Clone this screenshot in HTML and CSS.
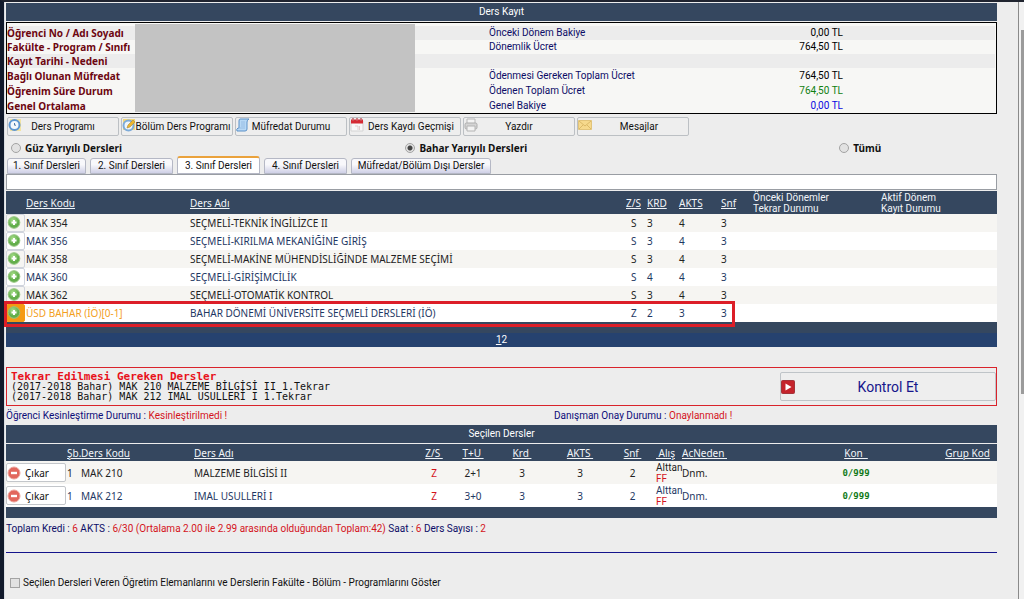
FILE: index.html
```html
<!DOCTYPE html>
<html lang="tr">
<head>
<meta charset="utf-8">
<title>Ders Kayıt</title>
<link rel="stylesheet" href="styles.css">
</head>
<body>
<svg class="defs" aria-hidden="true">
  <defs>
    <radialGradient id="green" cx="40%" cy="30%"><stop offset="0" stop-color="#a6dd88"/><stop offset="1" stop-color="#62ae4b"/></radialGradient>
    <symbol id="plus" viewBox="0 0 14 14"><circle cx="7" cy="6.500" r="5.800" fill="url(#green)" stroke="#94c57f"/><path d="M7 4v5M4.500 6.500h5" stroke="#fff" stroke-width="2"/></symbol>
    <symbol id="minus" viewBox="0 0 14 14"><circle cx="7" cy="7" r="6" fill="#e2675d" stroke="#eda39b"/><path d="M4 7h6" stroke="#fff" stroke-width="2.400"/></symbol>
    <symbol id="clock" viewBox="0 0 14 14"><path d="M2 1h11v12H2z" fill="#f3e3a2"/><circle cx="6.500" cy="7" r="5" fill="#f3f8fd" stroke="#5b95d2" stroke-width="2"/><path d="M6.500 5v2.200H8" fill="none" stroke="#4c79ab"/></symbol>
    <symbol id="clockedit" viewBox="0 0 14 14"><path d="M1 1h12v11H1z" fill="#f2d779"/><circle cx="6.500" cy="7.500" r="5" fill="#eef5fb" stroke="#7cabd9" stroke-width="2"/><path d="M5 10l1-3 5-5 2 2-5 5z" fill="#edb72e" stroke="#a98a3b" stroke-width=".6"/></symbol>
    <symbol id="scroll" viewBox="0 0 14 14"><path d="M4 1h9q-2 1-2 3v7q0 2-2 2H1q-1-2 1-3h1V3q0-2 1-2z" fill="#b7d8f5" stroke="#5b91c8"/><path d="M5 4h4M5 6h4M5 8h4M2 10h7" stroke="#8fb8e0" stroke-width=".8"/></symbol>
    <symbol id="calendar" viewBox="0 0 14 14"><path d="M1 3h12v10H1z" fill="#f8f8f8" stroke="#d4d4d4"/><path d="M1 1.500h12v4H1z" fill="#d52a33"/><path d="M3 0v3M7 0v3M11 0v3" stroke="#a51620"/><path d="M3 1v2M7 1v2M11 1v2" stroke="#f5d9d9" stroke-width=".5"/><path d="M5 8h3v4M9.500 8v4" fill="none" stroke="#e0cfcf"/></symbol>
    <symbol id="printer" viewBox="0 0 14 14"><path d="M3 1h8v5H3z" fill="#f4f4f4" stroke="#b8b8b8"/><rect x="1" y="5" width="12" height="6" rx="1.500" fill="#d4d4d4" stroke="#adadad"/><path d="M3 8h8v5H3z" fill="#f3f3f3" stroke="#b4b4b4"/></symbol>
    <symbol id="mail" viewBox="0 0 14 14"><path d="M.5 2.500h13v9H.5z" fill="#f6d98c" stroke="#e2c47a"/><path d="M1 3l6 5 6-5M1 11l4-4M13 11L9 7" fill="none" stroke="#dbb967"/></symbol>
    <symbol id="play" viewBox="0 0 14 14"><rect x=".5" y=".5" width="13" height="13" rx="1" fill="#c5242c" stroke="#a3343a"/><path d="M4.500 3.500v7L10.500 7z" fill="#fff"/></symbol>
  </defs>
</svg>
<div class="shell">
<main class="page">
  <h1 class="bar title">Ders Kayıt</h1>

  <section class="info">
    <div class="photo"></div>
    <table class="info-table">
      <colgroup><col class="i-name"><col class="i-hidden"><col class="i-label"><col class="i-amount"><col></colgroup>
      <tr><th>Öğrenci No / Adı Soyadı</th><td></td><td>Önceki Dönem Bakiye</td><td class="amount">0,00 TL</td><td></td></tr>
      <tr><th>Fakülte - Program / Sınıfı</th><td></td><td>Dönemlik Ücret</td><td class="amount">764,50 TL</td><td></td></tr>
      <tr><th>Kayıt Tarihi - Nedeni</th><td></td><td></td><td></td><td></td></tr>
      <tr><th>Bağlı Olunan Müfredat</th><td></td><td>Ödenmesi Gereken Toplam Ücret</td><td class="amount">764,50 TL</td><td></td></tr>
      <tr><th>Öğrenim Süre Durum</th><td></td><td>Ödenen Toplam Ücret</td><td class="amount paid">764,50 TL</td><td></td></tr>
      <tr><th>Genel Ortalama</th><td></td><td>Genel Bakiye</td><td class="amount balance">0,00 TL</td><td></td></tr>
    </table>
  </section>

  <nav class="tools">
    <button type="button"><svg class="icon"><use href="#clock"/></svg>Ders Programı</button>
    <button type="button" class="long"><svg class="icon"><use href="#clockedit"/></svg>Bölüm Ders Programı</button>
    <button type="button"><svg class="icon"><use href="#scroll"/></svg>Müfredat Durumu</button>
    <button type="button" class="long"><svg class="icon"><use href="#calendar"/></svg>Ders Kaydı Geçmişi</button>
    <button type="button"><svg class="icon"><use href="#printer"/></svg>Yazdır</button>
    <button type="button" class="long"><svg class="icon"><use href="#mail"/></svg>Mesajlar</button>
  </nav>

  <div class="terms">
    <label><input type="radio" name="term">Güz Yarıyılı Dersleri</label>
    <label><input type="radio" name="term" checked>Bahar Yarıyılı Dersleri</label>
    <label><input type="radio" name="term">Tümü</label>
  </div>

  <nav class="tabs">
    <button type="button">1. Sınıf Dersleri</button>
    <button type="button">2. Sınıf Dersleri</button>
    <button type="button" class="active">3. Sınıf Dersleri</button>
    <button type="button">4. Sınıf Dersleri</button>
    <button type="button" class="wide">Müfredat/Bölüm Dışı Dersler</button>
  </nav>
  <div class="tab-panel"></div>

  <table class="grid courses">
    <colgroup><col class="c-icon"><col class="c-code"><col><col class="c-zs"><col class="c-krd"><col class="c-akts"><col class="c-snf"><col class="c-prev"><col class="c-act"></colgroup>
    <thead><tr><th></th><th><a href="#">Ders Kodu</a></th><th><a href="#">Ders Adı</a></th><th><a href="#">Z/S</a></th><th><a href="#">KRD</a></th><th><a href="#">AKTS</a></th><th><a href="#">Snf</a></th><th class="state">Önceki Dönemler<br>Tekrar Durumu</th><th class="state">Aktif Dönem<br>Kayıt Durumu</th></tr></thead>
    <tbody>
      <tr><td><button type="button" class="add" aria-label="Ekle"><svg class="icon"><use href="#plus"/></svg></button></td><td>MAK 354</td><td>SEÇMELİ-TEKNİK İNGİLİZCE II</td><td class="zs">S</td><td>3</td><td>4</td><td>3</td><td></td><td></td></tr>
      <tr><td><button type="button" class="add" aria-label="Ekle"><svg class="icon"><use href="#plus"/></svg></button></td><td>MAK 356</td><td>SEÇMELİ-KIRILMA MEKANİĞİNE GİRİŞ</td><td class="zs">S</td><td>3</td><td>4</td><td>3</td><td></td><td></td></tr>
      <tr><td><button type="button" class="add" aria-label="Ekle"><svg class="icon"><use href="#plus"/></svg></button></td><td>MAK 358</td><td>SEÇMELİ-MAKİNE MÜHENDİSLİĞİNDE MALZEME SEÇİMİ</td><td class="zs">S</td><td>3</td><td>4</td><td>3</td><td></td><td></td></tr>
      <tr><td><button type="button" class="add" aria-label="Ekle"><svg class="icon"><use href="#plus"/></svg></button></td><td>MAK 360</td><td>SEÇMELİ-GİRİŞİMCİLİK</td><td class="zs">S</td><td>4</td><td>4</td><td>3</td><td></td><td></td></tr>
      <tr><td><button type="button" class="add" aria-label="Ekle"><svg class="icon"><use href="#plus"/></svg></button></td><td>MAK 362</td><td>SEÇMELİ-OTOMATİK KONTROL</td><td class="zs">S</td><td>3</td><td>4</td><td>3</td><td></td><td></td></tr>
      <tr class="marked"><td><button type="button" class="add" aria-label="Ekle"><svg class="icon"><use href="#plus"/></svg></button><span class="outline"></span></td><td class="orange">ÜSD BAHAR (İÖ)[0-1]</td><td>BAHAR DÖNEMİ ÜNİVERSİTE SEÇMELİ DERSLERİ (İÖ)</td><td class="zs">Z</td><td>2</td><td>3</td><td>3</td><td></td><td></td></tr>
    </tbody>
  </table>
  <div class="foot"></div>
  <div class="pager"><a href="#">1</a><span>2</span></div>

  <section class="alert">
    <div class="alert-text">
      <h2>Tekrar Edilmesi Gereken Dersler</h2>
      <p>(2017-2018 Bahar) MAK 210 MALZEME BİLGİSİ II 1.Tekrar</p>
      <p>(2017-2018 Bahar) MAK 212 IMAL USULLERİ I 1.Tekrar</p>
    </div>
    <button type="button" class="check"><svg class="icon"><use href="#play"/></svg>Kontrol Et</button>
  </section>

  <div class="status">
    <p>Öğrenci Kesinleştirme Durumu : <span class="red">Kesinleştirilmedi !</span></p>
    <p>Danışman Onay Durumu : <span class="red">Onaylanmadı !</span></p>
  </div>

  <h2 class="bar chosen-title">Seçilen Dersler</h2>
  <table class="grid chosen">
    <colgroup><col class="s-btn"><col class="s-sb"><col class="s-code"><col><col class="s-zs"><col class="s-tu"><col class="s-num"><col class="s-num"><col class="s-snf"><col class="s-alis"><col class="s-neden"><col class="s-kon"><col class="s-grup"></colgroup>
    <thead><tr><th></th><th><a href="#">Şb.</a></th><th><a href="#">Ders Kodu</a></th><th><a href="#">Ders Adı</a></th><th class="mid"><a href="#">Z/S&nbsp;</a></th><th class="mid"><a href="#">T+U&nbsp;</a></th><th class="mid"><a href="#">Krd&nbsp;</a></th><th class="mid"><a href="#">AKTS&nbsp;</a></th><th class="mid"><a href="#">Snf&nbsp;</a></th><th><a href="#">&nbsp;Alış</a></th><th><a href="#">AcNeden&nbsp;</a></th><th class="mid"><a href="#">Kon&nbsp;&nbsp;</a></th><th class="mid"><a href="#">Grup Kod</a></th></tr></thead>
    <tbody>
      <tr><td><button type="button" class="drop"><svg class="icon"><use href="#minus"/></svg>Çıkar</button></td><td>1</td><td>MAK 210</td><td>MALZEME BİLGİSİ II</td><td class="mid red">Z</td><td class="mid">2+1</td><td class="mid">3</td><td class="mid">3</td><td class="mid">2</td><td class="grade">Alttan<br><span class="red">FF</span></td><td>Dnm.</td><td class="mid quota">0/999</td><td></td></tr>
      <tr><td><button type="button" class="drop"><svg class="icon"><use href="#minus"/></svg>Çıkar</button></td><td>1</td><td>MAK 212</td><td>IMAL USULLERİ I</td><td class="mid red">Z</td><td class="mid">3+0</td><td class="mid">3</td><td class="mid">3</td><td class="mid">2</td><td class="grade">Alttan<br><span class="red">FF</span></td><td>Dnm.</td><td class="mid quota">0/999</td><td></td></tr>
    </tbody>
  </table>
  <div class="foot"></div>

  <p class="totals">Toplam Kredi : <span class="red">6</span> AKTS : <span class="red">6/30 (Ortalama 2.00 ile 2.99 arasında olduğundan Toplam:42)</span> Saat : <span class="red">6</span> Ders Sayısı : <span class="red">2</span></p>
  <hr>
  <label class="show"><input type="checkbox">Seçilen Dersleri Veren Öğretim Elemanlarını ve Derslerin Fakülte - Bölüm - Programlarını Göster</label>
</main>
<div class="scroll"><div class="thumb"></div></div>
</div>
</body>
</html>
```
FILE: styles.css
```css
* { box-sizing: border-box; }

body {
  margin: 0;
  background: #ededed;
  color: #111;
  font: 10px/12px Roboto, sans-serif;
  overflow: hidden;
}

h1, h2, p { margin: 0; font-size: 10px; font-weight: 400; }
button { font: inherit; color: inherit; padding: 0; margin: 0; }
.defs { position: absolute; width: 0; height: 0; }
.icon { width: 14px; height: 14px; flex: none; display: block; }
.red { color: #d4141c; }

.shell {
  display: flex;
  min-height: 100vh;
  border-top: 2px solid #20242f;
  border-left: 4px solid #111a2b;
}

.page { flex: 1; padding: 1px 21px 8px 1px; border-left: 1px solid #d9dde2; }

.scroll { width: 6px; border-left: 1px solid #8a8a8a; background: #f1f1f1; padding: 28px 0 0 2px; }
.thumb { height: 364px; background: #9b9b9b; }

.bar { background: #35475f; color: #fff; text-align: center; line-height: 18px; }

/* Student and fee summary */
.info { position: relative; border: 1px solid #000; margin-top: 1px; padding: 3px 1px 0 0; background: #f7f7f5; }
.info-table { width: 100%; border-collapse: collapse; table-layout: fixed; }
.info-table th, .info-table td { padding: 0; height: 15px; line-height: 14px; text-align: left; white-space: nowrap; color: #0c0c66; }
.info-table tr:nth-child(-n+3) th, .info-table tr:nth-child(-n+3) td { height: 14px; }
.info-table th { color: #6d0610; font-family: "Noto Sans", sans-serif; font-weight: 700; }
.info-table tr:nth-child(1), .info-table tr:nth-child(3) { background: #ececec; }
.info-table .amount { text-align: right; color: #000; }
.info-table .paid { color: #108010; }
.info-table .balance { color: #0a0ae0; }
.i-name { width: 129px; }
.i-hidden { width: 353px; }
.i-label { width: 203px; }
.i-amount { width: 151px; }
.photo { position: absolute; left: 128px; top: 1px; bottom: 1px; width: 280px; background: #c3c3c3; }

/* Toolbar */
.tools { display: flex; gap: 2px; padding: 3px 0 0 1px; }
.tools button { position: relative; width: 112px; height: 19px; border: 1px solid #bcc0c4; border-radius: 2px; background: #eee; line-height: 17px; white-space: nowrap; }
.tools .long { padding-left: 12px; }
.tools .icon { position: absolute; left: 0; top: 0; }

.terms { display: grid; grid-template-columns: 40% 44% 1fr; padding: 5px 0 1px 5px; font-family: "Noto Sans", sans-serif; font-weight: 700; }
.terms label { display: flex; align-items: center; gap: 4px; height: 14px; white-space: nowrap; }
.terms input, .show input { appearance: none; margin: 0; width: 10px; height: 10px; border: 1px solid #a3a3a3; background: #e2e2e2; }
.terms input { border-radius: 50%; }
.terms input:checked { background: radial-gradient(circle, #444 0 2px, #e2e2e2 3px); }

/* Tabs */
.tabs { display: flex; align-items: flex-end; gap: 4px; padding-left: 1px; }
.tabs button { width: 83px; height: 16px; border: 1px solid #b5b8c5; border-radius: 3px 3px 0 0; background: linear-gradient(#f8f8fb 40%, #cfd0e6); line-height: 14px; white-space: nowrap; }
.tabs button:first-child { width: 79px; }
.tabs .active { height: 18px; border-top: 2px solid #eaa23c; background: #fff; }
.tabs .wide { width: 140px; }
.tab-panel { height: 16px; border: 1px solid #999da3; background: #fff; margin-bottom: 1px; }

/* Course tables */
.grid { width: 100%; border-collapse: collapse; table-layout: fixed; font-family: "Noto Sans", sans-serif; }
.grid th, .grid td { padding: 0; text-align: left; font-weight: 400; white-space: nowrap; }
.grid th, .grid th a { color: #f2f5f9; }
.grid thead { background: #35475f; }
.grid tbody tr { background: #f6f5f2; color: #222; }
.grid tbody tr:nth-child(even) { background: #fff; color: #1e3763; }
.grid .mid { text-align: center; }
.grid .red { color: #d4141c; }
.courses th { height: 23px; }
.courses .state { font-family: Roboto, sans-serif; line-height: 11px; }
.courses td { height: 18px; }
.courses .zs { padding-left: 5px; }
.c-icon { width: 20px; }
.c-code { width: 164px; }
.c-zs { width: 21px; }
.c-krd { width: 32px; }
.c-akts { width: 42px; }
.c-snf { width: 32px; }
.c-prev { width: 128px; }
.c-act { width: 116px; }
.add { display: block; width: 19px; height: 18px; border: 1px solid #d0d4dc; border-radius: 2px; background: transparent; }
.marked { position: relative; }
.marked .add { background: #f59a13; border-color: #f59a13; }
.grid .orange { color: #f3a01e; }
.outline { position: absolute; left: -2px; top: -3px; width: 731px; height: 26px; border: 3px solid #dc1e28; }
.foot { height: 11px; background: #35475f; }
.pager { background: #26426f; color: #fff; text-align: center; line-height: 14px; }
.pager a { color: #fff; }

/* Repeat warning */
.alert { display: flex; justify-content: space-between; align-items: center; margin-top: 20px; border: 1px solid #d9232b; height: 39px; }
.alert-text { padding-left: 4px; font-family: "DejaVu Sans Mono", monospace; line-height: 10px; }
.alert h2 { font-size: 11px; font-weight: 700; color: #e8121b; }
.check { position: relative; width: 216px; height: 29px; border: 1px solid #bfc4c8; border-radius: 2px; background: #eee; color: #16168c; font-size: 14px; }
.check .icon { position: absolute; left: 0; top: 7px; }

.status { display: grid; grid-template-columns: 548px 1fr; padding: 4px 0 3px; color: #0c0c78; }

.chosen-title { margin-bottom: 1px; }
.chosen th { height: 17px; }
.chosen td { height: 23px; }
.s-btn { width: 61px; }
.s-sb { width: 14px; }
.s-code { width: 113px; }
.s-zs { width: 38px; }
.s-tu { width: 40px; }
.s-num { width: 58px; }
.s-snf { width: 47px; }
.s-alis { width: 26px; }
.s-neden { width: 92px; }
.s-kon { width: 164px; }
.s-grup { width: 59px; }
.drop { display: flex; align-items: center; gap: 4px; width: 60px; height: 19px; border: 1px solid #c3c6ca; border-radius: 2px; background: #fff; color: #111; }
.chosen .grade { line-height: 11px; font-family: Roboto, sans-serif; }
.chosen .quota { color: #107a18; font: 700 9px "DejaVu Sans Mono", monospace; }

.totals { padding-top: 5px; color: #0c0c66; }
hr { border: 0; border-top: 1px solid #14148c; margin: 17px 0 24px; }
.show { display: flex; align-items: center; gap: 3px; padding-left: 4px; }
```
